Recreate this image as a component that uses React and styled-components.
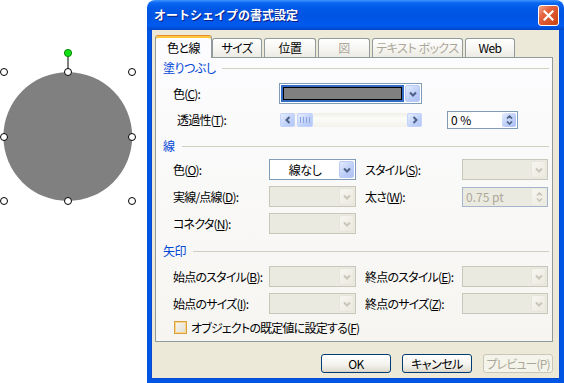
import React from 'react';
import styled, { createGlobalStyle, css } from 'styled-components';

const GlobalStyle = createGlobalStyle`
  html, body { margin: 0; padding: 0; background: #fff; }
  body {
    font-family: "Noto Sans CJK JP", "Noto Sans", sans-serif;
    font-size: 12px;
    color: #000;
    font-feature-settings: "palt";
    letter-spacing: -0.5px;
  }
  u { text-decoration-thickness: 1px; text-underline-offset: 1px; }
`;

const Page = styled.div`
  display: flex;
  width: 564px;
  height: 383px;
  background: #fff;
  overflow: hidden;
`;

const Canvas = styled.svg`
  flex: 0 0 147px;
  height: 383px;
  display: block;
`;

const Window = styled.div`
  flex: 1;
  display: flex;
  flex-direction: column;
  min-width: 0;
  height: 383px;
`;

const TitleBar = styled.div`
  height: 30px;
  flex: 0 0 30px;
  box-sizing: border-box;
  display: flex;
  align-items: center;
  justify-content: space-between;
  padding: 0 5px 0 7px;
  border-radius: 8px 8px 0 0;
  background: linear-gradient(
    to bottom,
    #3d95ff 0,
    #0a66f0 3px,
    #0058e6 9px,
    #0054e3 55%,
    #005af0 85%,
    #0046c8 100%
  );
`;

const Title = styled.span`
  color: #fff;
  font-weight: bold;
  font-size: 12px;
  font-feature-settings: normal;
  letter-spacing: 0;
  line-height: 1;
  text-shadow: 1px 1px 0 #0a1f86;
`;

const CloseButton = styled.div`
  width: 21px;
  height: 21px;
  box-sizing: border-box;
  border: 1px solid #fff;
  border-radius: 3px;
  background: linear-gradient(135deg, #f3a58a 0%, #e4623e 35%, #c9410f 100%);
  display: flex;
  align-items: center;
  justify-content: center;
`;

const Frame = styled.div`
  flex: 1;
  display: flex;
  flex-direction: column;
  background: #ece9d8;
  border: solid #0055e5;
  border-width: 0 4px 4px 4px;
  box-shadow: inset 1px 0 0 #0a4ad0, inset -1px 0 0 #0a4ad0, inset 0 -1px 0 #0a4ad0;
  padding: 5px 7px 5px 4px;
`;

const TabRow = styled.div`
  display: flex;
  align-items: flex-end;
  height: 22px;
  position: relative;
  z-index: 1;
`;

const Tab = styled.div`
  width: ${(p) => p.$w}px;
  height: 19px;
  margin-left: ${(p) => p.$ml || 0}px;
  box-sizing: border-box;
  display: flex;
  align-items: center;
  justify-content: center;
  border: 1px solid #919b9c;
  border-bottom: none;
  border-radius: 3px 3px 0 0;
  background: linear-gradient(#ffffff, #f5f4f0 60%, #ebeae3);
  color: ${(p) => (p.$disabled ? '#aca899' : '#000')};
  line-height: 1;
  white-space: nowrap;
  ${(p) =>
    p.$active &&
    css`
      height: 23px;
      margin-bottom: -1px;
      background: #fcfcfe;
      border-top: 1px solid #e68b2c;
      box-shadow: inset 0 2px 0 #ffc83c;
      padding-top: 2px;
    `}
`;

const Panel = styled.div`
  height: 285px;
  box-sizing: border-box;
  border: 1px solid #919b9c;
  background: linear-gradient(#fcfcfe, #f6f5f1);
  padding: 4px 3px 0 7px;
  display: flex;
  flex-direction: column;
`;

const SectionHeader = styled.div`
  display: flex;
  align-items: center;
  gap: 7px;
  height: 12px;
  line-height: 12px;
  color: #0046d5;
  margin-top: ${(p) => p.$mt || 0}px;
  &::after {
    content: '';
    flex: 1;
    height: 1px;
    background: #d0d0bf;
  }
`;

const Row = styled.div`
  display: flex;
  align-items: center;
  height: 21px;
  margin-top: ${(p) => p.$mt || 0}px;
  padding-left: 10px;
`;

const Label = styled.div`
  flex: 0 0 ${(p) => p.$w}px;
  margin-left: ${(p) => p.$ml || 0}px;
  line-height: 1;
  letter-spacing: -0.8px;
  white-space: nowrap;
  box-sizing: border-box;
`;

const Combo = styled.div`
  flex: 0 0 ${(p) => p.$w}px;
  height: 21px;
  box-sizing: border-box;
  display: flex;
  align-items: stretch;
  padding: 1px;
  border: 1px solid ${(p) => (p.$disabled ? '#c9c7ba' : '#7f9db9')};
  background: ${(p) => (p.$disabled ? '#ebeae0' : '#fff')};
`;

const ComboText = styled.div`
  flex: 1;
  display: flex;
  align-items: center;
  justify-content: center;
  line-height: 1;
`;

const Swatch = styled.div`
  flex: 1;
  margin-right: 1px;
  border: 2px solid #316ac5;
  display: flex;
  & > span {
    flex: 1;
    border: 1px solid #000;
    background: #808080;
  }
`;

const DropButton = styled.div`
  flex: 0 0 15px;
  box-sizing: border-box;
  border-radius: 2px;
  display: flex;
  align-items: center;
  justify-content: center;
  border: 1px solid ${(p) => (p.$disabled ? '#e8e6dc' : '#b9cbf5')};
  background: ${(p) =>
    p.$disabled
      ? 'linear-gradient(135deg, #f6f5f0, #eceadf)'
      : 'linear-gradient(135deg, #e3ebfe, #bccdf7 60%, #adc2f5)'};
`;

const Scroll = styled.div`
  flex: 0 0 142px;
  height: 14px;
  display: flex;
  background: linear-gradient(#f0efe8, #fbfbf8 40%, #f3f2ec);
`;

const ScrollButton = styled.div`
  flex: 0 0 ${(p) => p.$w || 15}px;
  margin-left: ${(p) => p.$ml || 0}px;
  box-sizing: border-box;
  border: 1px solid #c3d3fd;
  border-radius: 2px;
  background: linear-gradient(135deg, #e6eefe, #c0d1f9 60%, #b3c6f6);
  display: flex;
  align-items: center;
  justify-content: center;
  gap: 2px;
`;

const Grip = styled.span`
  width: 1px;
  height: 6px;
  background: #8ea5dc;
`;

const Track = styled.div`
  flex: 1;
`;

const Spin = styled.div`
  flex: 0 0 ${(p) => p.$w}px;
  height: ${(p) => p.$h || 18}px;
  margin-left: ${(p) => p.$ml || 0}px;
  box-sizing: border-box;
  border: 1px solid ${(p) => (p.$disabled ? '#a6b4cc' : '#7f9db9')};
  background: ${(p) => (p.$disabled ? '#ebeae0' : '#fff')};
  color: ${(p) => (p.$disabled ? '#aca899' : '#000')};
  display: flex;
  align-items: stretch;
  padding: 1px;
`;

const SpinValue = styled.div`
  flex: 1;
  display: flex;
  align-items: center;
  padding-left: 2px;
  line-height: 1;
  letter-spacing: 0;
  font-feature-settings: normal;
`;

const SpinButtons = styled.div`
  flex: 0 0 14px;
  display: flex;
  flex-direction: column;
  align-items: center;
  justify-content: center;
  gap: 2px;
  border-radius: 2px;
  background: ${(p) =>
    p.$disabled
      ? 'linear-gradient(135deg, #f6f5f0, #eceadf)'
      : 'linear-gradient(135deg, #e3ebfe, #bccdf7 60%, #adc2f5)'};
`;

const CheckRow = styled.label`
  display: flex;
  align-items: center;
  gap: 4px;
  height: 13px;
  margin-top: 7px;
  padding-left: 11px;
  line-height: 1;
  letter-spacing: -0.8px;
`;

const CheckBox = styled.span`
  width: 13px;
  height: 13px;
  box-sizing: border-box;
  border: 1px solid #d9a13e;
  background: linear-gradient(135deg, #f8f7f2, #e0ded2);
  box-shadow: inset 0 0 0 1px #fbd68a;
`;

const ButtonRow = styled.div`
  display: flex;
  justify-content: flex-end;
  gap: 11px;
  margin-top: 12px;
`;

const Button = styled.div`
  width: 70px;
  height: 19px;
  box-sizing: border-box;
  border: 1px solid ${(p) => (p.$disabled ? '#c9c7ba' : '#003c74')};
  border-radius: 3px;
  display: flex;
  align-items: center;
  justify-content: center;
  line-height: 1;
  white-space: nowrap;
  letter-spacing: ${(p) => (p.$disabled ? '-0.9px' : '-0.5px')};
  color: ${(p) => (p.$disabled ? '#aca899' : '#000')};
  background: ${(p) =>
    p.$disabled ? '#f5f4ea' : 'linear-gradient(#ffffff, #f4f3ee 55%, #e3e0d6 90%, #d6d0c5)'};
`;

const Chevron = ({ dir = 'down', color = '#4d6185' }) => {
  const paths = {
    down: 'M1 1.5 L4 4.5 L7 1.5',
    up: 'M1 4.5 L4 1.5 L7 4.5',
    left: 'M4.5 1 L1.5 4 L4.5 7',
    right: 'M1.5 1 L4.5 4 L1.5 7',
  };
  const vertical = dir === 'down' || dir === 'up';
  return (
    <svg width={vertical ? 8 : 6} height={vertical ? 6 : 8} viewBox={vertical ? '0 0 8 6' : '0 0 6 8'}>
      <path d={paths[dir]} fill="none" stroke={color} strokeWidth="2" />
    </svg>
  );
};

const SmallChevron = ({ dir, color = '#4d6185' }) => (
  <svg width="7" height="4" viewBox="0 0 7 4">
    <path
      d={dir === 'up' ? 'M1 3.5 L3.5 1 L6 3.5' : 'M1 0.5 L3.5 3 L6 0.5'}
      fill="none"
      stroke={color}
      strokeWidth="1.6"
    />
  </svg>
);

const Dropdown = ({ w, disabled, children }) => (
  <Combo $w={w} $disabled={disabled}>
    {children || <ComboText />}
    <DropButton $disabled={disabled}>
      <Chevron dir="down" color={disabled ? '#c9c7ba' : '#4d6185'} />
    </DropButton>
  </Combo>
);

const SelectedShape = () => {
  const xs = [4, 68, 132];
  const ys = [72, 137, 201];
  const handles = [];
  ys.forEach((y, yi) =>
    xs.forEach((x, xi) => {
      if (xi === 1 && yi === 1) return;
      handles.push(<circle key={`${x}-${y}`} cx={x} cy={y} r="3.5" fill="#fff" stroke="#000" strokeWidth="1" />);
    })
  );
  return (
    <Canvas viewBox="0 0 147 383">
      <circle cx="67.8" cy="136.6" r="64.4" fill="#808080" />
      <line x1="68" y1="54" x2="68" y2="72" stroke="#000" strokeWidth="1" />
      {handles}
      <circle cx="68" cy="53" r="3.6" fill="#14e014" stroke="#0a8a0a" strokeWidth="1" />
    </Canvas>
  );
};

export default function App() {
  return (
    <>
      <GlobalStyle />
      <Page>
        <SelectedShape />
        <Window>
          <TitleBar>
            <Title>オートシェイプの書式設定</Title>
            <CloseButton>
              <svg width="11" height="11" viewBox="0 0 11 11">
                <path d="M1.5 1.5 L9.5 9.5 M9.5 1.5 L1.5 9.5" stroke="#fff" strokeWidth="2.2" strokeLinecap="square" />
              </svg>
            </CloseButton>
          </TitleBar>
          <Frame>
            <TabRow>
              <Tab $w={57} $active>色と線</Tab>
              <Tab $w={50}>サイズ</Tab>
              <Tab $w={52} $ml={2}>位置</Tab>
              <Tab $w={52} $ml={2} $disabled>図</Tab>
              <Tab $w={91} $ml={2} $disabled>テキスト ボックス</Tab>
              <Tab $w={50} $ml={2}>Web</Tab>
            </TabRow>
            <Panel>
              <SectionHeader>塗りつぶし</SectionHeader>
              <Row $mt={9}>
                <Label $w={106}>色(<u>C</u>):</Label>
                <Dropdown w={143}>
                  <Swatch>
                    <span />
                  </Swatch>
                </Dropdown>
              </Row>
              <Row $mt={5}>
                <Label $w={103} $ml={4}>透過性(<u>T</u>):</Label>
                <Scroll>
                  <ScrollButton>
                    <Chevron dir="left" />
                  </ScrollButton>
                  <ScrollButton $w={16} $ml={2}>
                    <Grip />
                    <Grip />
                    <Grip />
                    <Grip />
                  </ScrollButton>
                  <Track />
                  <ScrollButton>
                    <Chevron dir="right" />
                  </ScrollButton>
                </Scroll>
                <Spin $w={71} $ml={25}>
                  <SpinValue>0 %</SpinValue>
                  <SpinButtons>
                    <SmallChevron dir="up" />
                    <SmallChevron dir="down" />
                  </SpinButtons>
                </Spin>
              </Row>

              <SectionHeader $mt={10}>線</SectionHeader>
              <Row $mt={7}>
                <Label $w={96}>色(<u>O</u>):</Label>
                <Dropdown w={87}>
                  <ComboText>線なし</ComboText>
                </Dropdown>
                <Label $w={97} $ml={9}>スタイル(<u>S</u>):</Label>
                <Dropdown w={86} disabled />
              </Row>
              <Row $mt={6}>
                <Label $w={96}>実線/点線(<u>D</u>):</Label>
                <Dropdown w={87} disabled />
                <Label $w={97} $ml={9}>太さ(<u>W</u>):</Label>
                <Spin $w={86} $h={20} $disabled>
                  <SpinValue>0.75 pt</SpinValue>
                  <SpinButtons $disabled>
                    <SmallChevron dir="up" color="#c9c7ba" />
                    <SmallChevron dir="down" color="#c9c7ba" />
                  </SpinButtons>
                </Spin>
              </Row>
              <Row $mt={6}>
                <Label $w={96}>コネクタ(<u>N</u>):</Label>
                <Dropdown w={87} disabled />
              </Row>

              <SectionHeader $mt={11}>矢印</SectionHeader>
              <Row $mt={9}>
                <Label $w={96}>始点のスタイル(<u>B</u>):</Label>
                <Dropdown w={87} disabled />
                <Label $w={97} $ml={9}>終点のスタイル(<u>E</u>):</Label>
                <Dropdown w={86} disabled />
              </Row>
              <Row $mt={6}>
                <Label $w={96}>始点のサイズ(<u>I</u>):</Label>
                <Dropdown w={87} disabled />
                <Label $w={97} $ml={9}>終点のサイズ(<u>Z</u>):</Label>
                <Dropdown w={86} disabled />
              </Row>
              <CheckRow>
                <CheckBox />
                <span>オブジェクトの既定値に設定する(<u>F</u>)</span>
              </CheckRow>
            </Panel>
            <ButtonRow>
              <Button>OK</Button>
              <Button>キャンセル</Button>
              <Button $disabled>プレビュー(P)</Button>
            </ButtonRow>
          </Frame>
        </Window>
      </Page>
    </>
  );
}
